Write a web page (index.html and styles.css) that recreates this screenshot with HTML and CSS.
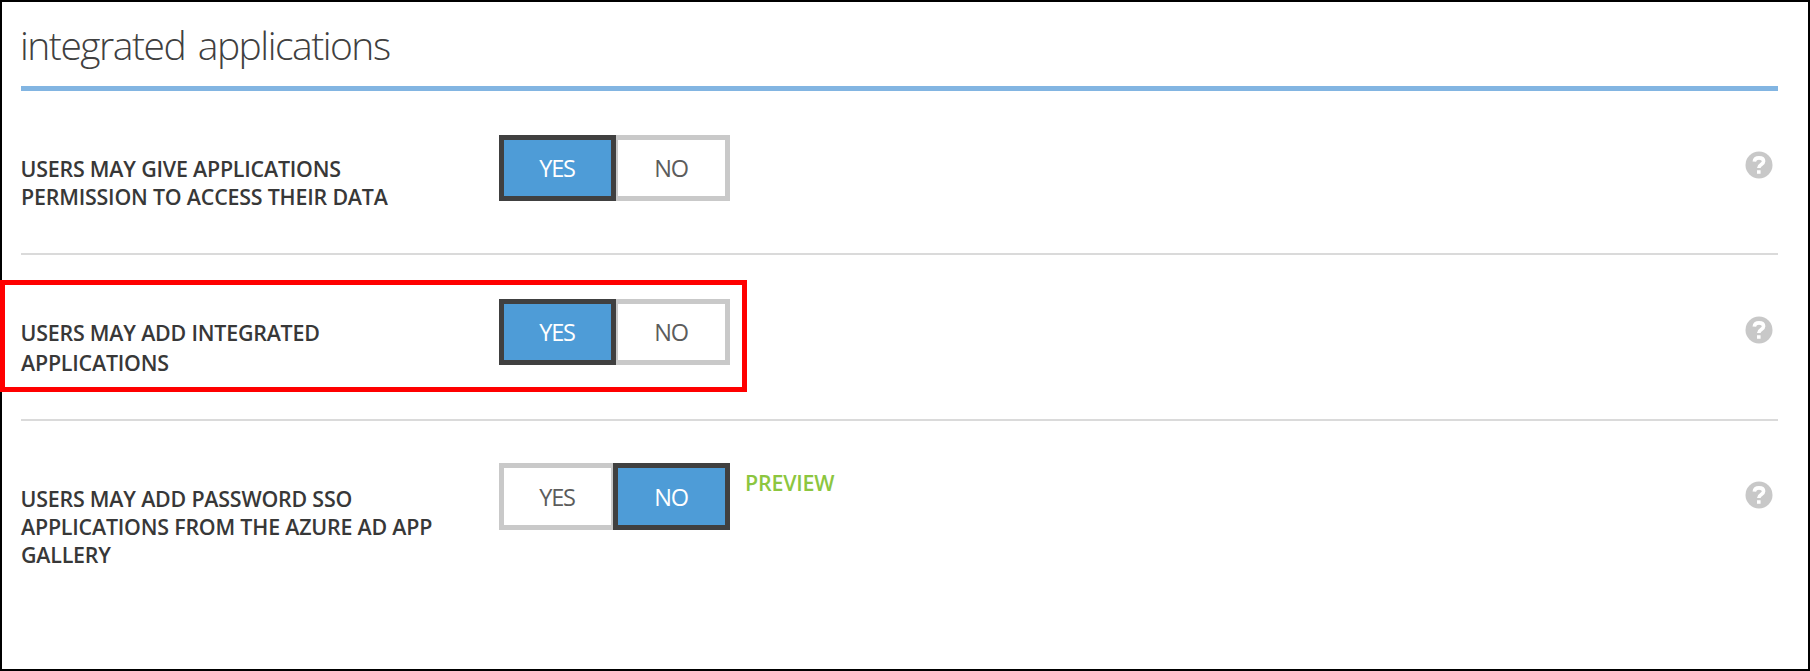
FILE: index.html
```html
<!DOCTYPE html>
<html lang="en">
<head>
<meta charset="utf-8">
<title>integrated applications</title>
<link rel="stylesheet" href="styles.css">
</head>
<body>
<main class="panel">
  <h1 class="title">integrated applications</h1>
  <section class="setting">
    <p class="label">USERS MAY GIVE APPLICATIONS<br>PERMISSION TO ACCESS THEIR DATA</p>
    <div class="toggle"><button class="option selected">YES</button><button class="option">NO</button></div>
    <svg class="help" viewBox="0 0 28 28"><circle cx="14" cy="14" r="13.5"/><path d="M9.3 10.600C9.600 8 11.300 6.900 14 6.900c2.700 0 4.600 1.200 4.600 3.400 0 3.300-4.800 3.100-4.800 6.700M13.800 19.200v3.600"/></svg>
  </section>
  <section class="setting second">
    <p class="label">USERS MAY ADD INTEGRATED<br>APPLICATIONS</p>
    <div class="toggle"><button class="option selected">YES</button><button class="option">NO</button></div>
    <svg class="help" viewBox="0 0 28 28"><circle cx="14" cy="14" r="13.5"/><path d="M9.3 10.600C9.600 8 11.300 6.900 14 6.900c2.700 0 4.600 1.200 4.600 3.400 0 3.300-4.800 3.100-4.800 6.700M13.800 19.200v3.600"/></svg>
    <div class="highlight"></div>
  </section>
  <section class="setting third">
    <p class="label">USERS MAY ADD PASSWORD SSO<br>APPLICATIONS FROM THE AZURE AD APP<br>GALLERY</p>
    <div class="toggle"><button class="option">YES</button><button class="option selected">NO</button></div>
    <span class="preview">PREVIEW</span>
    <svg class="help" viewBox="0 0 28 28"><circle cx="14" cy="14" r="13.5"/><path d="M9.3 10.600C9.600 8 11.300 6.900 14 6.900c2.700 0 4.600 1.200 4.600 3.400 0 3.300-4.800 3.100-4.800 6.700M13.800 19.200v3.600"/></svg>
  </section>
</main>
</body>
</html>
```
FILE: styles.css
```css
* { box-sizing: border-box; }
body { margin: 0; background: #fff; font-family: "Open Sans", "Noto Sans", sans-serif; }
.panel { height: 671px; border: 2px solid #000; padding: 0 30px 0 19px; }
.title {
  height: 89px; margin: 0; padding-top: 13px;
  border-bottom: 5px solid #82b5e2;
  font-size: 39px; line-height: 60px; font-weight: 300; letter-spacing: -1.500px; word-spacing: 4px;
  color: #404040; white-space: nowrap; text-indent: -1px;
}
.setting {
  position: relative; display: flex; align-items: flex-start;
  height: 164px; padding-top: 44px; border-bottom: 2px solid #dadada;
}
.label {
  width: 478px; margin: 20px 0 0;
  font-size: 21.400px; line-height: 28.200px; font-weight: 600; letter-spacing: -0.200px;
  color: #383838; white-space: nowrap; text-indent: -0.500px;
}
.toggle { display: flex; width: 231px; height: 66px; }
.option {
  width: 117px; height: 100%; padding: 0 1px 0 0;
  border: 5px solid #c9c9c9; background: #fff; color: #5c5c5c;
  font-family: inherit; font-size: 23.500px; line-height: 30px; letter-spacing: -1.200px;
}
.option + .option { margin-left: -3px; }
.option.selected { position: relative; border-color: #404040; background: #4e9cd7; color: #fff; }
.preview {
  margin: 5px 0 0 15px; font-size: 21.400px; line-height: 30px; font-weight: 600;
  letter-spacing: -0.200px; color: #8cc63f;
}
.help { width: 28px; height: 28px; margin: 16px 5px 0 auto; }
.help circle { fill: #c8c8c8; }
.help path { fill: none; stroke: #fff; stroke-width: 3.600; }
.highlight { position: absolute; left: -21px; top: 25px; width: 747px; height: 112px; border: 5px solid #f00; }
.second { height: 166px; }
.second .label { margin-top: 19px; line-height: 29.500px; }
.second .help { margin-top: 17px; }
.third { border-bottom: 0; padding-top: 42px; }
.third .label { margin-top: 22px; }
.third .help { margin-top: 18px; }
.third .toggle { height: 67px; }
```
